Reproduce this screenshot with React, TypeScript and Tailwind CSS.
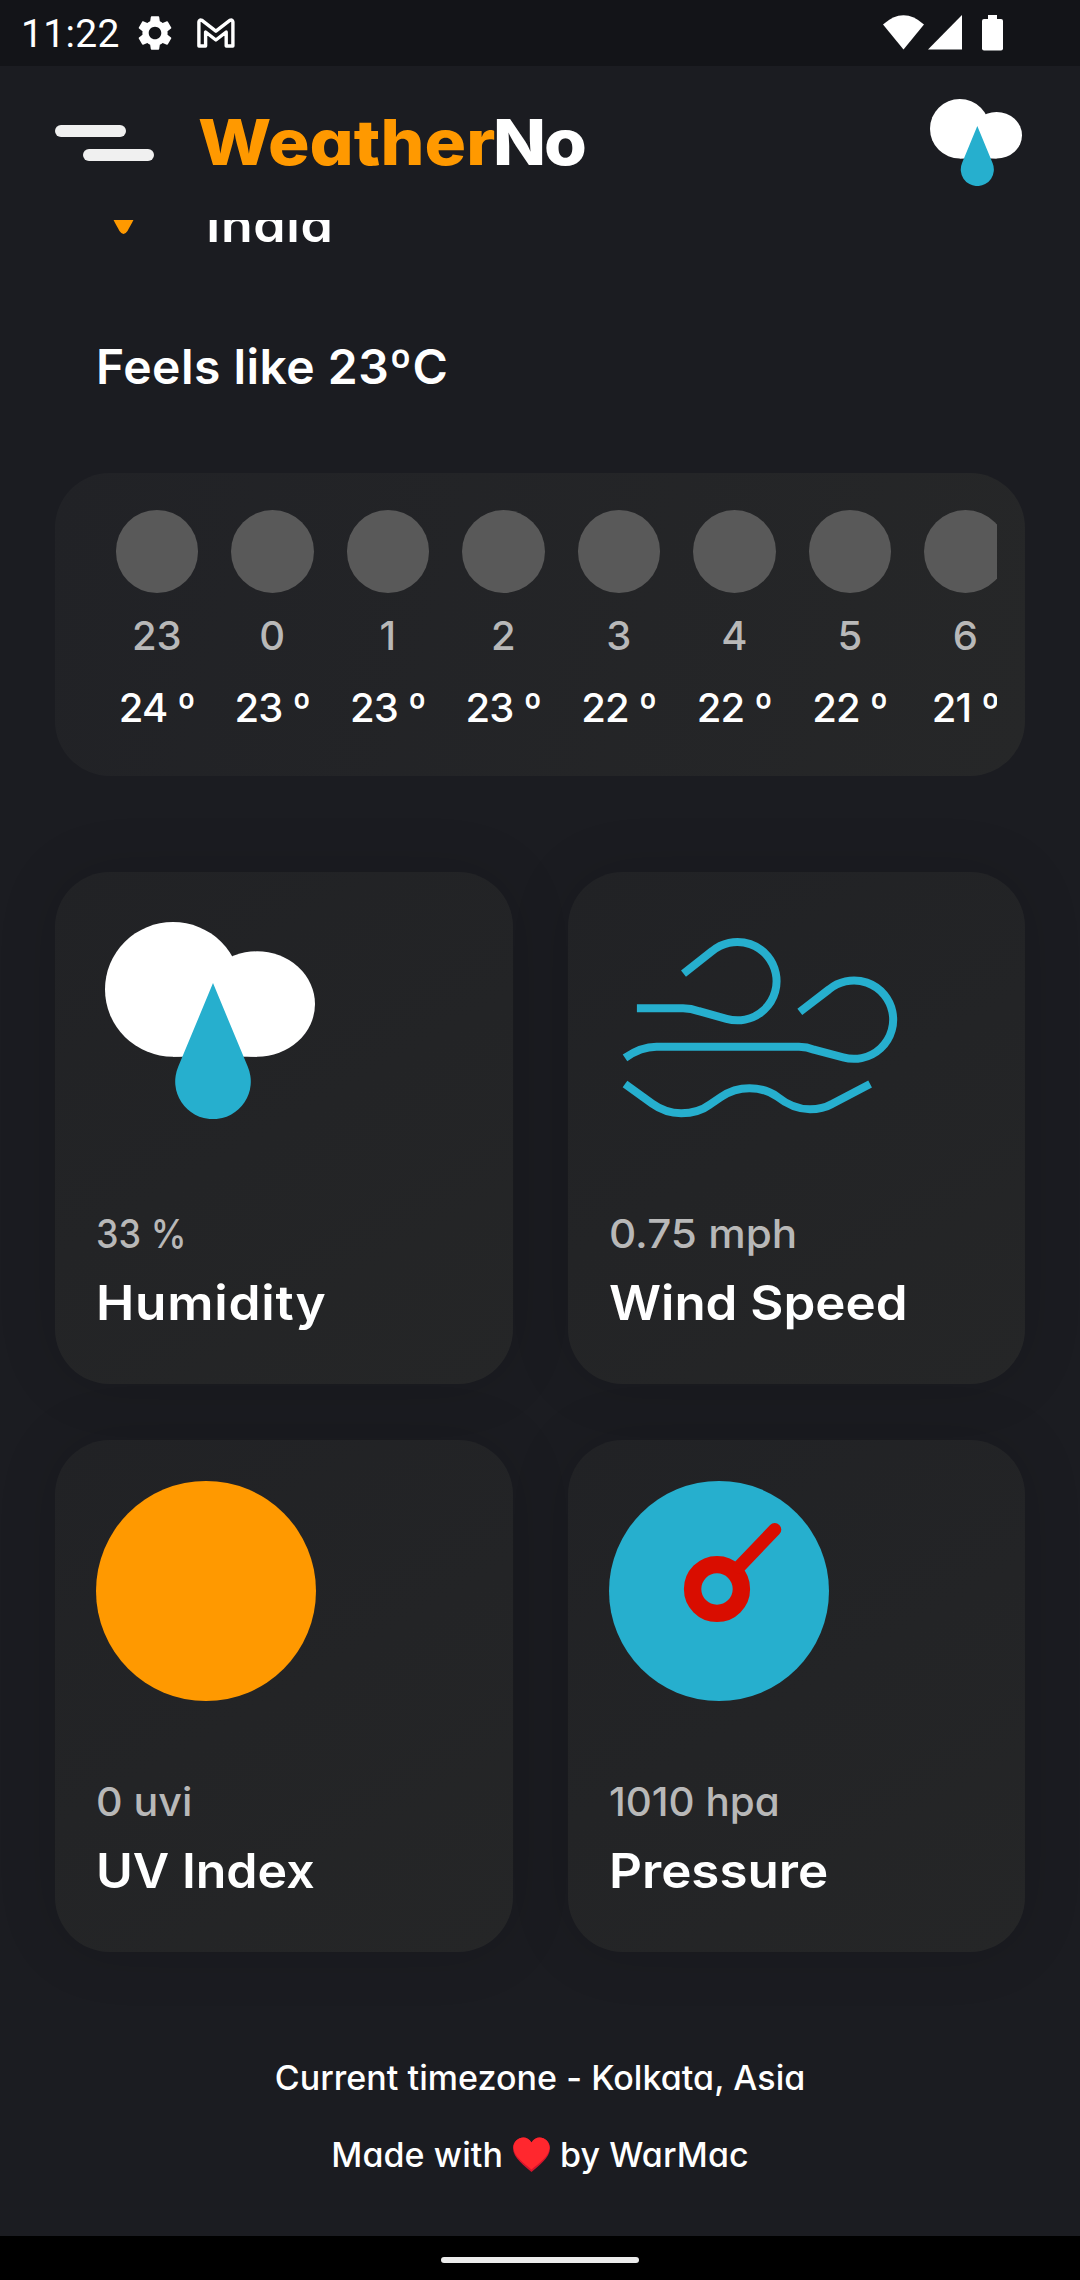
import type { ReactNode } from "react";
import { MdSettings } from "react-icons/md";

const hours = [
  { hour: "23", temp: "24 º" },
  { hour: "0", temp: "23 º" },
  { hour: "1", temp: "23 º" },
  { hour: "2", temp: "23 º" },
  { hour: "3", temp: "22 º" },
  { hour: "4", temp: "22 º" },
  { hour: "5", temp: "22 º" },
  { hour: "6", temp: "21 º" },
];

function CloudDrop({ className }: { className: string }) {
  return (
    <svg viewBox="0 0 210 198" preserveAspectRatio="none" className={className}>
      <g fill="#ffffff">
        <ellipse cx="68" cy="67.7" rx="68" ry="67.7" />
        <ellipse cx="152" cy="82.5" rx="58" ry="53" />
        <rect x="68" y="90" width="84" height="45.4" />
      </g>
      <path d="M108 61.4 L142.8 145.6 A37.8 37.8 0 1 1 73.2 145.6 Z" fill="#26afce" />
    </svg>
  );
}

function Wind() {
  return (
    <svg viewBox="0 0 300 220" className="h-[220px] w-[300px]" fill="none" stroke="#26afce" strokeWidth="8">
      <path d="M74.5 60.6 L103.3 38 A39.2 39.2 0 1 1 117.5 105.8 L90 98.2 Q82 95.2 74 95.2 H27.9" />
      <path d="M190.8 98.8 L219.9 76.5 A39.2 39.2 0 1 1 234.1 144.3 L205 136.7 Q198 133.8 190 133.8 H47.5 Q32 133.8 16 144.9" />
      <path d="M16 171 L43 190.5 C52 197 61 200.2 72.2 200.2 C84 200.2 93 197.5 101 191.5 L112 184 C121 177.8 130 175.2 140.5 175.2 C151 175.2 160 178 168 183.5 C178 191.5 188 196.3 201 196.3 C208 196.3 216 195 223 191 L261.1 171" />
    </svg>
  );
}

function Gauge() {
  return (
    <svg viewBox="0 0 220 220" className="h-[220px] w-[220px]">
      <circle cx="110" cy="110" r="110" fill="#26afce" />
      <circle cx="108" cy="108" r="24.4" fill="none" stroke="#d90d00" strokeWidth="17.4" />
      <path d="M130 86 L165.8 48.6" stroke="#d90d00" strokeWidth="13" strokeLinecap="round" />
    </svg>
  );
}

function StatCard({ icon, value, label, valueClass, labelClass }: { icon: ReactNode; value: string; label: string; valueClass: string; labelClass: string }) {
  return (
    <section className="flex h-[512px] flex-col items-start rounded-[55px] bg-[linear-gradient(150deg,#212225,#252627)] p-[41px] shadow-[0_0_60px_rgba(0,0,0,0.13)]">
      <div className="h-[220px] shrink-0">{icon}</div>
      <p className={`mt-[81px] origin-left text-[40px] leading-[40px] font-medium whitespace-pre text-[#b8b8b8] ${valueClass}`}>{value}</p>
      <h2 className={`mt-[24.5px] origin-left text-[48px] leading-[48px] font-semibold whitespace-nowrap ${labelClass}`}>{label}</h2>
    </section>
  );
}

function StatusBar() {
  return (
    <div className="flex h-[66px] shrink-0 items-center bg-[#131418]">
      <span className="mt-[2px] ml-[21px] w-[113px] font-['Roboto',sans-serif] text-[39px] leading-[40px] tracking-[0.3px]">11:22</span>
      <MdSettings className="size-[42px]" />
      <svg viewBox="0 0 38 30" className="ml-[21px] h-[30px] w-[38px]" fill="none" stroke="white" strokeWidth="3.4" strokeLinejoin="round">
        <path d="M1.9 28 V4 Q2.2 1.2 5 2.4 L18.9 13.2 L32.8 2.4 Q35.6 1.2 35.9 4 V28 H29.2 V14 L18.9 22 L8.6 14 V28 Z" />
      </svg>
      <svg viewBox="0 0 42 36" className="mr-[3px] ml-auto h-[36px] w-[42px]" fill="white">
        <path d="M0 9.5 Q20.5 -9 41 9.5 L20.5 34.5 Z" />
      </svg>
      <svg viewBox="0 0 34 36" className="h-[36px] w-[34px]" fill="white">
        <path d="M34 0 V34.5 H0 Z" />
      </svg>
      <svg viewBox="0 0 21 36" className="mr-[77px] ml-[20px] h-[36px] w-[21px]" fill="white">
        <rect x="6" y="0" width="9" height="6" />
        <rect x="0" y="4" width="21" height="31.5" rx="2" />
      </svg>
    </div>
  );
}

export default function App() {
  return (
    <div className="flex h-[2280px] w-[1080px] flex-col overflow-hidden bg-[#1b1c21] font-['Inter',sans-serif] text-white [font-feature-settings:'cv11']">
      <StatusBar />

      <header className="flex h-[154px] shrink-0 items-center pr-[58px] pl-[55px]">
        <button className="flex w-[99px] flex-col gap-[12px]" aria-label="Menu">
          <span className="h-[12px] w-[71px] rounded-full bg-[#f0f0f0]" />
          <span className="h-[12px] w-[71px] self-end rounded-full bg-[#f0f0f0]" />
        </button>
        <h1 className="mb-[3px] ml-[44px] origin-left scale-x-[1.1] text-[63px] leading-[64px] font-extrabold">
          <span className="text-[#ff9900]">Weather</span>
          <span className="-ml-[2px] tracking-[-2px]">No</span>
        </h1>
        <CloudDrop className="mb-[2px] ml-auto h-[87px] w-[92px]" />
      </header>

      <main className="h-[2016px] shrink-0 overflow-hidden">
        <div className="-mt-[19px] flex h-[48px] items-end pl-[111px]">
          <svg viewBox="0 0 25 40" className="mb-[15px] h-[40px] w-[25px] shrink-0" fill="#ff9900">
            <path d="M0 18 C0 5 25 5 25 18 C25 23 20 30 16.5 37 Q12.5 43 8.5 37 C5 30 0 23 0 18 Z" />
          </svg>
          <p className="ml-[70px] origin-left scale-x-[1.08] text-[48px] leading-[48px] font-semibold tracking-[0.6px]">India</p>
        </div>

        <p className="mt-[94px] ml-[96px] text-[48px] leading-[48px] font-semibold tracking-[0.5px]">Feels like 23ºC</p>

        <section className="mx-[55px] mt-[82px] h-[303px] rounded-[55px] bg-[linear-gradient(105deg,#212226,#262728)] px-[28px] pt-[37px]">
          <div className="flex gap-[33px] overflow-hidden pb-[12px] pl-[32.5px]">
            {hours.map(({ hour, temp }) => (
              <div key={hour} className="flex w-[82.5px] shrink-0 flex-col items-center">
                <span className="size-[82.5px] rounded-full bg-[#595959]" />
                <span className="mt-[23.5px] text-[40px] leading-[40px] font-medium text-[#b8b8b8]">{hour}</span>
                <span className="mt-[32px] text-[40px] leading-[40px] font-medium tracking-[-0.8px] whitespace-nowrap">{temp}</span>
              </div>
            ))}
          </div>
        </section>

        <div className="mx-[55px] mt-[96px] grid grid-cols-2 gap-x-[55px] gap-y-[56px]">
          <StatCard icon={<CloudDrop className="mt-[9px] ml-[8.5px] h-[197px] w-[210px]" />} value="33 %" label="Humidity" valueClass="scale-x-[0.9]" labelClass="scale-x-[1.07] tracking-[0.7px]" />
          <StatCard icon={<Wind />} value="0.75 mph" label="Wind Speed" valueClass="scale-x-[1.055]" labelClass="scale-x-[1.063]" />
          <StatCard icon={<div className="size-[220px] rounded-full bg-[#ff9900]" />} value="0 uvi" label="UV Index" valueClass="scale-x-[1.03]" labelClass="scale-x-[1.043]" />
          <StatCard icon={<Gauge />} value="1010 hpa" label="Pressure" valueClass="scale-x-[1.01]" labelClass="scale-x-[1.065]" />
        </div>

        <footer className="flex flex-col items-center text-[34px] leading-[34px] font-medium">
          <p className="mt-[109px] tracking-[0.05px]">Current timezone - Kolkata, Asia</p>
          <p className="mt-[42px] flex items-center tracking-[0.1px]">
            Made with
            <svg viewBox="0 0 37 35" className="mx-[10px] h-[35px] w-[37px]">
              <path d="M18.5 35 C12 29 0 21 0 11 C0 1 13 -4 18.5 5.5 C24 -4 37 1 37 11 C37 21 25 29 18.5 35 Z" fill="#d5142c" />
              <path d="M18.5 32.5 C12 27 0.5 19.5 0.5 10.5 C0.5 1 13 -4 18.5 5.5 C24 -4 36.5 1 36.5 10.5 C36.5 19.5 25 27 18.5 32.5 Z" fill="#ff272e" />
            </svg>
            by WarMac
          </p>
        </footer>
      </main>

      <div className="flex h-[44px] shrink-0 justify-center bg-black pt-[21px]">
        <span className="h-[6px] w-[198px] rounded-full bg-[#ebebeb]" />
      </div>
    </div>
  );
}
